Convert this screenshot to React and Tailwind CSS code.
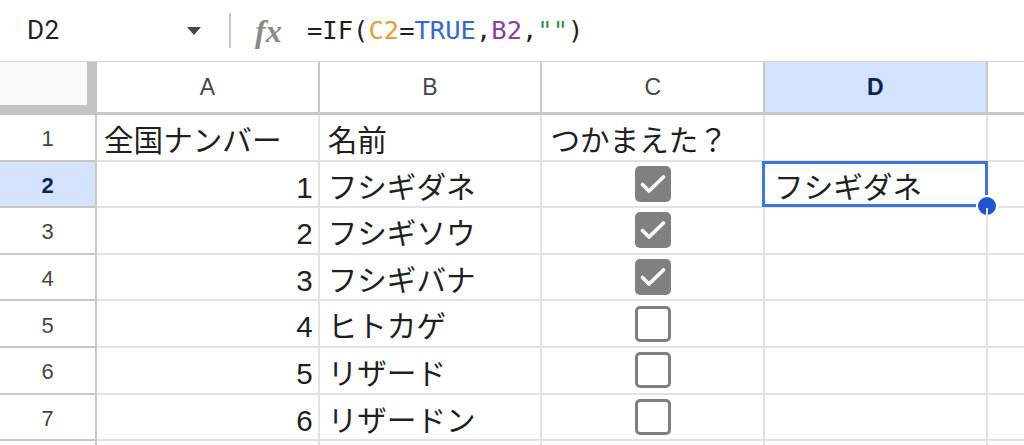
import React from "react";

const cols = ["A", "B", "C", "D"];

const rows = [
  { n: 1, a: "全国ナンバー", b: "名前", c: "つかまえた？", header: true },
  { n: 2, a: "1", b: "フシギダネ", c: true, d: "フシギダネ" },
  { n: 3, a: "2", b: "フシギソウ", c: true },
  { n: 4, a: "3", b: "フシギバナ", c: true },
  { n: 5, a: "4", b: "ヒトカゲ", c: false },
  { n: 6, a: "5", b: "リザード", c: false },
  { n: 7, a: "6", b: "リザードン", c: false },
  { n: 8, a: "", b: "", c: null, blank: true },
];

function Checkbox({ checked }) {
  if (checked) {
    return (
      <span className="flex h-[36px] w-[36px] items-center justify-center rounded-[5px] bg-[#808080]">
        <svg width="36" height="36" viewBox="0 0 36 36">
          <path d="M7.5 18.5 L14 25 L28.5 11" fill="none" stroke="#fff" strokeWidth="3.6" strokeLinecap="round" strokeLinejoin="round" />
        </svg>
      </span>
    );
  }
  return <span className="block h-[36px] w-[36px] rounded-[5px] border-[3px] border-[#7f7f7f]" />;
}

export default function App() {
  return (
    <div className="h-[445px] w-[1024px] overflow-hidden bg-white font-['Liberation_Sans','Noto_Sans_CJK_JP',sans-serif] text-[#1f1f1f]">
      {/* Formula bar */}
      <div className="flex h-[62px] items-center border-b border-[#d5d5d5]">
        <div className="flex w-[229px] items-center pl-[27px] pr-[28px]">
          <span className="font-['Roboto',sans-serif] text-[26px] tracking-[0.5px] text-[#1f1f1f]">D2</span>
          <svg className="ml-auto" width="14" height="8" viewBox="0 0 14 8">
            <path d="M0 0 H14 L7 8 Z" fill="#444746" />
          </svg>
        </div>
        <div className="h-[35px] w-[2px] bg-[#c7c7c7]" />
        <span className="ml-[24px] w-[52px] font-['Liberation_Serif',serif] text-[32px] font-bold italic leading-none text-[#8a8a8a]">
          fx
        </span>
        <span className="font-['DejaVu_Sans_Mono',monospace] text-[25.5px] text-[#1f1f1f]">
          =IF(<span className="text-[#ec9a37]">C2</span>=<span className="text-[#3468d8]">TRUE</span>,
          <span className="text-[#8b3fa5]">B2</span>,<span className="text-[#2f9445]">""</span>)
        </span>
      </div>

      {/* Grid */}
      <div className="grid grid-cols-[97px_repeat(4,222.7px)_1fr] grid-rows-[53px_repeat(8,46.6px)]">
        {/* corner */}
        <div className="bg-[#c4c4c4]">
          <div className="h-[43px] w-[87px] bg-[#f8f9fa]" />
        </div>
        {cols.map((c) => (
          <div
            key={c}
            className={
              "flex items-center justify-center border-r-2 border-b-[3px] border-[#c7c7c7] text-[23px] " +
              (c === "D" ? "bg-[#d3e3fd] font-bold text-[#0b2350]" : "bg-white text-[#444746]")
            }
          >
            {c}
          </div>
        ))}
        <div className="border-b-[3px] border-[#c7c7c7]" />

        {rows.map((r) => {
          const sel = r.n === 2;
          return (
            <React.Fragment key={r.n}>
              <div
                className={
                  "flex items-center justify-center border-r-2 border-b-2 border-[#c7c7c7] pt-[3px] text-[22px] " +
                  (sel ? "bg-[#d3e3fd] font-bold text-[#0b2350]" : "text-[#444746]")
                }
              >
                {r.blank ? null : r.n}
              </div>
              <div
                className={
                  "flex items-end border-r-2 border-b-2 border-[#e2e2e2] pb-[4px] text-[29.6px] leading-none " +
                  (r.header ? "pl-[7px]" : "justify-end pr-[5px]")
                }
              >
                {r.a}
              </div>
              <div className="flex items-end border-r-2 border-b-2 border-[#e2e2e2] pb-[4px] pl-[8px] text-[29.6px] leading-none">
                {r.b}
              </div>
              <div
                className={
                  "flex border-r-2 border-b-2 border-[#e2e2e2] text-[29.6px] leading-none " +
                  (r.header ? "items-end pb-[4px] pl-[8px]" : "items-center justify-center")
                }
              >
                {r.header ? r.c : r.c === null ? null : <Checkbox checked={r.c} />}
              </div>
              <div className="relative flex items-end border-r-2 border-b-2 border-[#e2e2e2] pb-[4px] pl-[9px] text-[29.6px] leading-none">
                {r.d}
                {sel && (
                  <>
                    <div className="absolute -top-[1px] -left-[3px] -right-[2px] -bottom-[1px] border-[3px] border-[#3b78dd]" />
                    <div className="absolute -right-[12px] -bottom-[11px] h-[22px] w-[22px] rounded-full border-2 border-white bg-[#1f55d0]" />
                  </>
                )}
              </div>
              <div className="border-b-2 border-[#e2e2e2]" />
            </React.Fragment>
          );
        })}
      </div>
    </div>
  );
}
